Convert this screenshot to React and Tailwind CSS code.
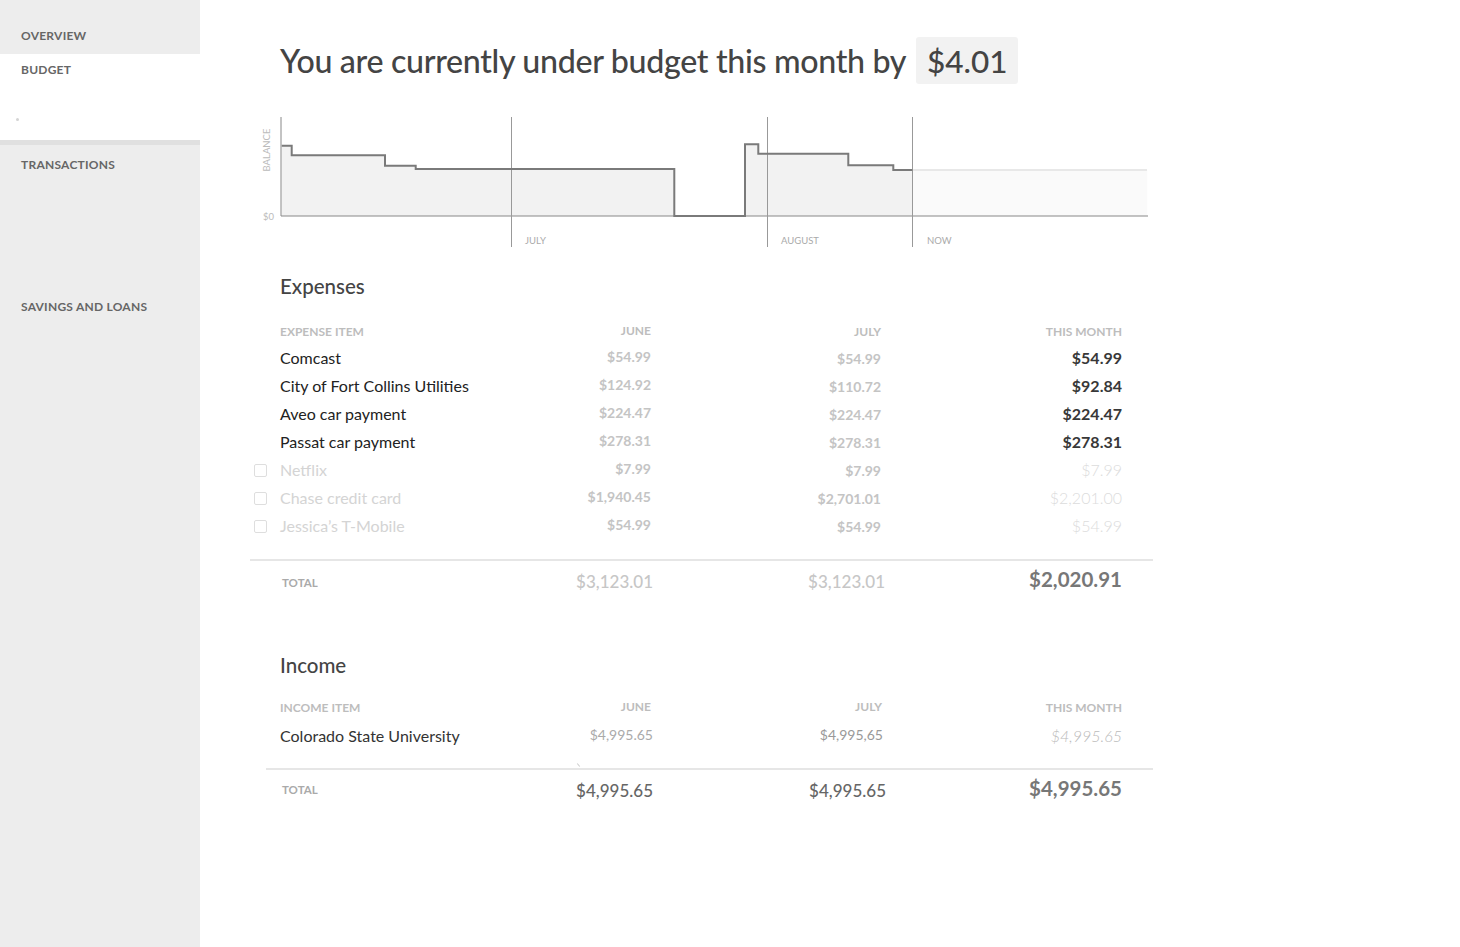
const EXPENSES = [
  { name: 'Comcast', june: '$54.99', july: '$54.99', now: '$54.99', on: true },
  { name: 'City of Fort Collins Utilities', june: '$124.92', july: '$110.72', now: '$92.84', on: true },
  { name: 'Aveo car payment', june: '$224.47', july: '$224.47', now: '$224.47', on: true },
  { name: 'Passat car payment', june: '$278.31', july: '$278.31', now: '$278.31', on: true },
  { name: 'Netflix', june: '$7.99', july: '$7.99', now: '$7.99', on: false },
  { name: 'Chase credit card', june: '$1,940.45', july: '$2,701.01', now: '$2,201.00', on: false },
  { name: 'Jessica’s T-Mobile', june: '$54.99', july: '$54.99', now: '$54.99', on: false },
]

const COLS = 'grid grid-cols-[291px_80px_230px_241px] items-center'

const STEP =
  '31.7,35.7 41.7,35.7 41.7,45.3 135,45.3 135,55.7 165.7,55.7 165.7,59 424.3,59 424.3,106 495,106 495,34.3 508.3,34.3 508.3,43.7 598.3,43.7 598.3,55.3 643.3,55.3 643.3,60 662.3,60'

function Sidebar() {
  return (
    <aside className="flex w-[200px] shrink-0 flex-col bg-[#ededed] text-[12px] font-bold tracking-[0.02em] text-[#666]">
      <div className="h-[54px] px-[21px] pt-[27px]">OVERVIEW</div>
      <div className="relative h-[86px] bg-white px-[21px] pt-[7px]">
        BUDGET
        <span className="absolute left-[16px] top-[64px] h-[3px] w-[3px] rounded-full bg-[#d4d4d4]" />
      </div>
      <div className="h-[5px] bg-[#e0e0e0]" />
      <div className="h-[153px] px-[21px] pt-[11px]">TRANSACTIONS</div>
      <div className="px-[21px]">SAVINGS AND LOANS</div>
    </aside>
  )
}

function Chart() {
  return (
    <svg width="910" height="140" className="-ml-[30px] mt-[25px] block" style={{ fontFamily: 'Lato, sans-serif' }}>
      <rect x="662.3" y="60" width="235" height="46" fill="#fafafa" />
      <line x1="662.3" y1="60" x2="897" y2="60" stroke="#e8e8e8" strokeWidth="2" />
      <polygon points={`${STEP} 662.3,106 31.7,106`} fill="#f2f2f2" />
      <line x1="31" y1="7" x2="31" y2="106" stroke="#888" strokeWidth="1" />
      <line x1="31" y1="106" x2="898" y2="106" stroke="#888" strokeWidth="1" />
      {[261.5, 517.5, 662.5].map((x) => (
        <line key={x} x1={x} y1="7" x2={x} y2="137" stroke="#999" strokeWidth="1" />
      ))}
      <polyline points={STEP} fill="none" stroke="#7a7a7a" strokeWidth="2" />
      <text x="13" y="109.5" fontSize="9.5" fill="#bbb">$0</text>
      <text x="0" y="0" fontSize="9.5" fill="#bbb" textAnchor="middle" transform="translate(20 40) rotate(-90)">BALANCE</text>
      <text x="275" y="133.5" fontSize="9.5" fill="#aaa">JULY</text>
      <text x="531" y="133.5" fontSize="9.5" fill="#aaa">AUGUST</text>
      <text x="677" y="133.5" fontSize="9.5" fill="#aaa">NOW</text>
    </svg>
  )
}

function Checkbox() {
  return <span className="h-[13px] w-[13px] shrink-0 rounded-[2px] border border-[#dedede]" />
}

function Expenses() {
  return (
    <section className="mt-[21px]">
      <h2 className="text-[20.5px] font-medium text-[#444]">Expenses</h2>
      <div className={`${COLS} mt-[19px] h-[22px] text-[12px] font-bold text-[#bdbdbd]`}>
        <span>EXPENSE ITEM</span>
        <span className="-mt-[2px] text-right">JUNE</span>
        <span className="text-right">JULY</span>
        <span className="text-right">THIS MONTH</span>
      </div>
      <div className="mt-[1px]">
        {EXPENSES.map((r) => (
          <div key={r.name} className={`${COLS} h-[28px]`}>
            <span className={`flex items-center text-[16px] ${r.on ? 'text-[#222]' : '-ml-[26px] gap-[13px] text-[#d4d4d4]'}`}>
              {!r.on && <Checkbox />}
              {r.name}
            </span>
            <span className="-mt-[3px] text-right text-[14px] font-bold text-[#c4c4c4]">{r.june}</span>
            <span className="text-right text-[14px] font-bold text-[#c4c4c4]">{r.july}</span>
            <span className={`text-right text-[16px] ${r.on ? 'font-bold text-[#383838]' : 'font-light text-[#dcdcdc]'}`}>{r.now}</span>
          </div>
        ))}
      </div>
      <div className="-ml-[30px] mr-[-31px] mt-[19px] h-[2px] bg-[#e6e6e6]" />
      <div className={`${COLS} h-[40px]`}>
        <span className="pl-[2px] pt-[3px] text-[11.5px] font-bold text-[#aaa]">TOTAL</span>
        <span className="-mr-[2px] pt-[2px] text-right text-[17px] font-medium text-[#c6c6c6]">$3,123.01</span>
        <span className="-mr-[4px] pt-[2px] text-right text-[17px] font-medium text-[#c6c6c6]">$3,123.01</span>
        <span className="-mt-[4px] text-right text-[20.5px] font-bold text-[#777]">$2,020.91</span>
      </div>
    </section>
  )
}

function Income() {
  return (
    <section className="mt-[49px]">
      <h2 className="text-[20.5px] font-medium text-[#444]">Income</h2>
      <div className={`${COLS} mt-[15px] h-[22px] text-[12px] font-bold text-[#bdbdbd]`}>
        <span className="pt-[2px]">INCOME ITEM</span>
        <span className="text-right">JUNE</span>
        <span className="-mr-[1px] text-right">JULY</span>
        <span className="pt-[2px] text-right">THIS MONTH</span>
      </div>
      <div className={`${COLS} mt-[4px] h-[28px]`}>
        <span className="text-[16px] text-[#333]">Colorado State University</span>
        <span className="-mr-[2px] -mt-[3px] text-right text-[14px] text-[#aaa]">$4,995.65</span>
        <span className="-mr-[2px] -mt-[3px] text-right text-[14px] text-[#999]">$4,995,65</span>
        <span className="text-right text-[16px] font-light italic text-[#bbb]">$4,995.65</span>
      </div>
      <div className="relative -ml-[14px] mr-[-31px] mt-[18px] h-[2px] bg-[#e6e6e6]">
        <span className="absolute left-[312px] top-[-5px] h-[4px] w-[1px] rotate-[-40deg] bg-[#ccc]" />
      </div>
      <div className={`${COLS} h-[40px]`}>
        <span className="pl-[2px] text-[11.5px] font-bold text-[#aaa]">TOTAL</span>
        <span className="-mr-[2px] pt-[2px] text-right text-[17px] font-medium text-[#666]">$4,995.65</span>
        <span className="-mr-[5px] pt-[2px] text-right text-[17px] font-medium text-[#666]">$4,995.65</span>
        <span className="-mt-[3px] text-right text-[20.5px] font-bold text-[#777]">$4,995.65</span>
      </div>
    </section>
  )
}

export default function App() {
  return (
    <div className="flex min-h-[947px] bg-white font-['Lato',sans-serif]">
      <Sidebar />
      <main className="flex-1 pl-[80px] pt-[35px]">
        <div className="flex items-center gap-[10px]">
          <h1 className="pt-[2px] text-[32.2px] font-medium tracking-[-0.01em] text-[#444]">
            You are currently under budget this month by
          </h1>
          <span className="flex h-[47px] w-[102px] items-center justify-center rounded-[3px] bg-[#f2f2f2] pt-[2px] text-[31.5px] font-medium text-[#444]">
            $4.01
          </span>
        </div>
        <div className="w-[842px]">
          <Chart />
          <Expenses />
          <Income />
        </div>
      </main>
    </div>
  )
}
